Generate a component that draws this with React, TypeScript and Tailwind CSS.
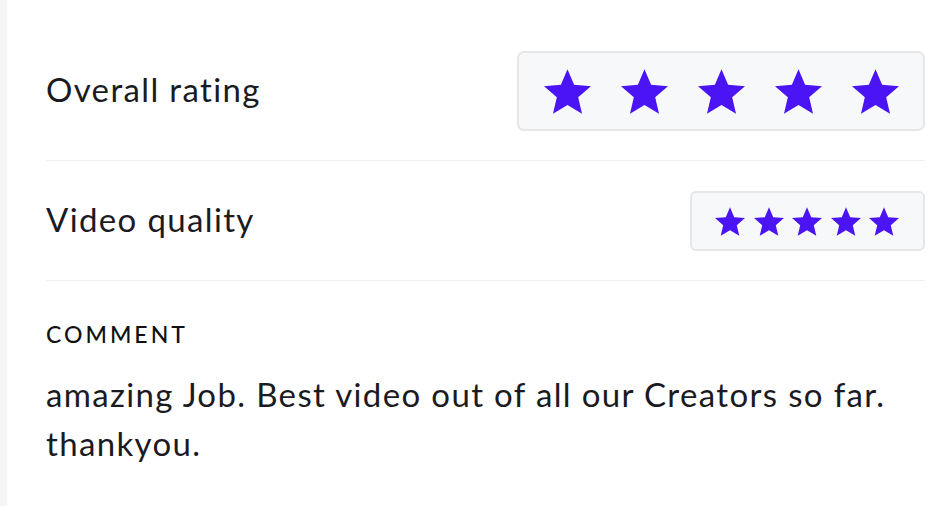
const STAR = "M12 17.27L18.18 21l-1.64-7.03L22 9.24l-7.19-.61L12 2 9.19 8.63 2 9.24l5.46 4.73L5.82 21z";

function Star({ className }: { className: string }) {
  return (
    <svg viewBox="2 2 20 19" className={className} fill="#4a14f5">
      <path d={STAR} />
    </svg>
  );
}

function RatingRow({ label, big }: { label: string; big?: boolean }) {
  return (
    <div className="flex items-center justify-between border-b border-[#efefef] py-[29px]">
      <span className="pb-[3px] text-[33px] leading-none tracking-[1.35px] text-[#1b1b1f]">{label}</span>
      {big ? (
        <div className="flex h-[80px] items-center gap-[30px] rounded-[7px] border-2 border-[#e6e7e9] bg-[#f7f8fa] pl-[25px] pr-[24px]">
          {[0, 1, 2, 3, 4].map((i) => (
            <Star key={i} className="h-[45px] w-[47px]" />
          ))}
        </div>
      ) : (
        <div className="flex h-[60px] items-center gap-[8.5px] rounded-[6px] border-2 border-[#e6e7e9] bg-[#f7f8fa] pl-[23px] pr-[24px]">
          {[0, 1, 2, 3, 4].map((i) => (
            <Star key={i} className="h-[29px] w-[30px]" />
          ))}
        </div>
      )}
    </div>
  );
}

export default function App() {
  return (
    <div className="flex min-h-[506px] bg-white" style={{ fontFamily: "Lato, 'Noto Sans', sans-serif" }}>
      <div className="w-[7px] shrink-0 bg-[#f4f5f7]" />
      <div className="flex-1 pl-[39px] pr-[22px] pt-[22px]">
        <RatingRow label="Overall rating" big />
        <div className="pt-[1px]">
          <RatingRow label="Video quality" />
        </div>
        <section className="pt-[42px]">
          <h3 className="text-[23px] font-medium uppercase leading-none tracking-[3px] text-[#111]">Comment</h3>
          <p className="mt-[24px] text-[33px] leading-[49px] tracking-[1.35px] text-[#1b1b1f]">
            amazing Job. Best video out of all our Creators so far. thankyou.
          </p>
        </section>
      </div>
    </div>
  );
}
